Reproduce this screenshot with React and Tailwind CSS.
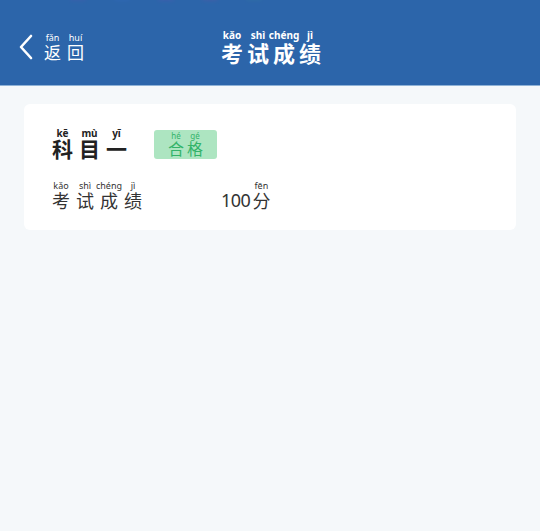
import React from "react";

const latin = { fontFamily: '"Noto Sans", "Liberation Sans", sans-serif' };
const cjk = { fontFamily: '"Noto Sans CJK SC", "Noto Sans", sans-serif' };

function Py({ py, ch, pyCls, chCls, w = "" }) {
  return (
    <span className={`inline-flex flex-col items-center ${w}`}>
      <span className={`whitespace-nowrap ${pyCls}`} style={latin}>{py}</span>
      <span className={chCls} style={cjk}>{ch}</span>
    </span>
  );
}

export default function App() {
  const hp = "text-[10px] leading-[10px] font-bold";
  const hc = "text-[22px] leading-[24px] font-bold";
  const rp = "text-[9px] leading-[9px]";
  const rc = "text-[18px] leading-[20px]";
  return (
    <div className="w-[540px] h-[531px] bg-[#f5f8fa] flex flex-col overflow-hidden">
      <header className="h-[86px] bg-[#2c65aa] border-b border-[#8fb2d6] grid grid-cols-[1fr_auto_1fr] items-center pt-[8px] relative">
        <div className="absolute top-[-4px] left-[70px] flex gap-[28px] opacity-30">
          <span className="w-[16px] h-[4px] rounded-full bg-[#6a4fb0] blur-[2px]"></span>
          <span className="w-[16px] h-[4px] rounded-full bg-[#3b6fd0] blur-[2px]"></span>
          <span className="w-[16px] h-[4px] rounded-full bg-[#7a4ab8] blur-[2px]"></span>
          <span className="w-[16px] h-[4px] rounded-full bg-[#8a4aa0] blur-[2px]"></span>
          <span className="w-[16px] h-[4px] rounded-full bg-[#3a8a9a] blur-[2px]"></span>
        </div>
        <div className="flex items-center pl-[17px] text-white">
          <svg width="18" height="28" viewBox="0 0 18 28" fill="none" stroke="white" strokeWidth="2.6" strokeLinecap="round" strokeLinejoin="round">
            <path d="M14 3 L4 14 L14 25" />
          </svg>
          <div className="flex gap-[6px] ml-[9px]">
            <Py py="fǎn" ch="返" pyCls="text-[9px] leading-[10px]" chCls="text-[17px] leading-[18px]" />
            <Py py="huí" ch="回" pyCls="text-[9px] leading-[10px]" chCls="text-[17px] leading-[18px]" />
          </div>
        </div>
        <div className="flex gap-[4px] text-white font-bold pl-[2px]">
          <Py w="w-[22px]" py="kǎo" ch="考" pyCls={hp} chCls={hc} />
          <Py w="w-[22px]" py="shì" ch="试" pyCls={hp} chCls={hc} />
          <Py w="w-[22px]" py="chéng" ch="成" pyCls={hp} chCls={hc} />
          <Py w="w-[22px]" py="jì" ch="绩" pyCls={hp} chCls={hc} />
        </div>
        <div></div>
      </header>

      <main className="px-[24px] pt-[18px]">
        <div className="bg-white rounded-[6px] h-[126px] pl-[28px] pt-[22px] flex flex-col">
          <div className="flex items-center">
            <div className="flex gap-[6px] text-[#222]">
              <Py py="kē" ch="科" pyCls="text-[10px] leading-[10px] font-bold" chCls="text-[21px] leading-[20px] font-bold" />
              <Py py="mù" ch="目" pyCls="text-[10px] leading-[10px] font-bold" chCls="text-[21px] leading-[20px] font-bold" />
              <Py py="yī" ch="一" pyCls="text-[10px] leading-[10px] font-bold" chCls="text-[21px] leading-[20px] font-bold" />
            </div>
            <div className="ml-[27px] w-[63px] h-[29px] rounded-[3px] bg-[#ade5c1] flex items-center justify-center gap-[3px] text-[#33b36a] mt-[4px]">
              <Py py="hé" ch="合" pyCls="text-[8px] leading-[8px]" chCls="text-[16px] leading-[17px]" />
              <Py py="gé" ch="格" pyCls="text-[8px] leading-[8px]" chCls="text-[16px] leading-[17px]" />
            </div>
          </div>
          <div className="flex items-end mt-[12px] text-[#333]">
            <div className="flex gap-[6px] w-[169px]">
              <Py w="w-[18px]" py="kǎo" ch="考" pyCls={rp} chCls={rc} />
              <Py w="w-[18px]" py="shì" ch="试" pyCls={rp} chCls={rc} />
              <Py w="w-[18px]" py="chéng" ch="成" pyCls={rp} chCls={rc} />
              <Py w="w-[18px]" py="jì" ch="绩" pyCls={rp} chCls={rc} />
            </div>
            <span className="text-[18px] leading-[20px] tracking-[-0.5px]" style={latin}>100</span>
            <span className="ml-[2px]">
              <Py py="fēn" ch="分" pyCls={rp} chCls={rc} />
            </span>
          </div>
        </div>
      </main>
    </div>
  );
}
